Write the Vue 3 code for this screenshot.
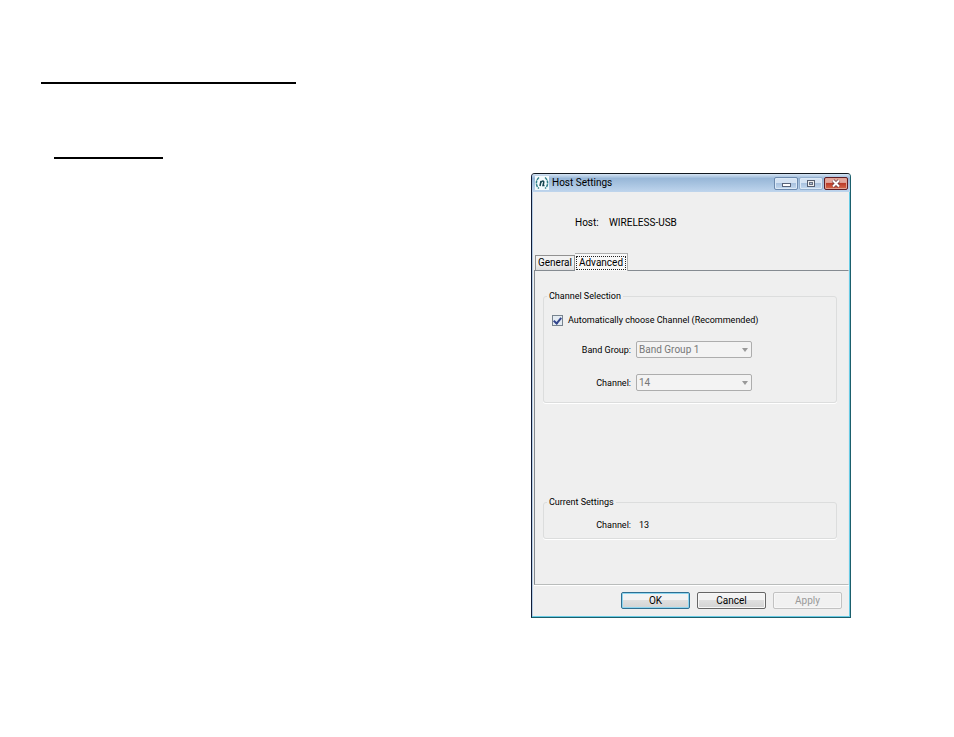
<script setup>
import { ref } from "vue";
const tab = ref("Advanced");
const tabs = ["General", "Advanced"];
const auto = ref(true);
const bandGroup = ref("Band Group 1");
const channel = ref("14");
</script>
<template>
  <main class="page">
    <section class="notes">
      <hr class="rule rule-main" />
      <hr class="rule rule-sub" />
    </section>
    <section class="dialog">
      <header class="titlebar">
        <svg class="logo" width="14" height="14" viewBox="0 0 14 14">
          <rect width="14" height="14" fill="#f4fbfd" />
          <g fill="none" stroke="#2f7f88" stroke-width="1.5">
            <path d="M4 1.5C.5 4 .5 10 4 12.5" stroke-dasharray="3 .7" />
            <path d="M10 1.5c3.500 2.500 3.500 8.500 0 11" stroke-dasharray="3 .7" />
            <path d="M5 10l1-5M5.800 6.500C7 4.500 9.200 4.500 8.700 6.500L8 9.500h1.500" stroke="#17454f" />
          </g>
        </svg>
        <h1 class="title">Host Settings</h1>
        <button class="win-button" aria-label="Minimize">
          <svg width="22" height="11" viewBox="0 0 22 11">
            <rect x="7.500" y="5.500" width="8" height="3" fill="#fff" stroke="#59647a" />
          </svg>
        </button>
        <button class="win-button maximize" aria-label="Maximize">
          <svg width="22" height="11" viewBox="0 0 22 11">
            <rect x="7.500" y="2.500" width="7" height="6" fill="#eee" stroke="#555e70" />
            <rect x="9.500" y="4.500" width="3" height="2" fill="#aebfd4" stroke="#666f80" />
          </svg>
        </button>
        <button class="win-button close" aria-label="Close">
          <svg width="22" height="11" viewBox="0 0 22 11">
            <path d="M8 2.500l6 6M14 2.500l-6 6" stroke="#6b3a40" stroke-width="3.500" />
            <path d="M8 2.500l6 6M14 2.500l-6 6" stroke="#fff" stroke-width="2" />
          </svg>
        </button>
      </header>
      <div class="host">
        <span class="host-label">Host:</span>
        <span>WIRELESS-USB</span>
      </div>
      <nav class="tabs">
        <button
          v-for="name in tabs"
          :key="name"
          class="tab"
          :class="{ active: tab === name }"
          @click="tab = name"
        >
          <span class="tab-text">{{ name }}</span>
        </button>
      </nav>
      <div class="panel">
        <fieldset class="group selection">
          <legend>Channel Selection</legend>
          <div class="check-row">
            <input id="auto" v-model="auto" class="check" type="checkbox" />
            <label for="auto">Automatically choose Channel (Recommended)</label>
          </div>
          <div class="field">
            <label class="field-label" for="band">Band Group:</label>
            <select id="band" v-model="bandGroup" class="combo" :disabled="auto">
              <option>Band Group 1</option>
            </select>
            <span class="arrow"></span>
          </div>
          <div class="field">
            <label class="field-label" for="channel">Channel:</label>
            <select id="channel" v-model="channel" class="combo" :disabled="auto">
              <option>14</option>
            </select>
            <span class="arrow"></span>
          </div>
        </fieldset>
        <fieldset class="group current">
          <legend>Current Settings</legend>
          <div class="current-row">
            <span class="field-label">Channel:</span>
            <span>13</span>
          </div>
        </fieldset>
      </div>
      <footer class="actions">
        <button class="action ok">OK</button>
        <button class="action">Cancel</button>
        <button class="action" disabled>Apply</button>
      </footer>
    </section>
  </main>
</template>
<style>
body {
  background: white;
}
</style>
<style scoped>
.page {
  display: flex;
  align-items: flex-start;
  padding: 82px 103px 60px 41px;
}
.page * {
  box-sizing: border-box;
}
.notes {
  flex: 1;
}
.rule {
  height: 2px;
  margin: 0;
  border: none;
  background: black;
}
.rule-main {
  width: 255px;
}
.rule-sub {
  width: 109px;
  margin: 73px 0 0 13px;
}
.dialog {
  flex: 0 0 320px;
  margin-top: 91px;
  background: #efefef;
  border: 1px solid #1b5f6c;
  border-top-color: #111820;
  border-left-color: #101c38;
  border-radius: 4px 4px 0 0;
  box-shadow: inset -1px -1px #68cbe4, inset 1px 0 #b5cce4;
  font-family: Roboto, "Liberation Sans", sans-serif;
  font-size: 9px;
  line-height: 12px;
  color: #000;
}
button,
select {
  font: inherit;
  font-size: 10px;
  color: inherit;
}
.titlebar {
  display: flex;
  align-items: center;
  height: 18px;
  padding: 0 2px 0 3px;
  border-radius: 3px 3px 0 0;
  background: linear-gradient(#d5e4f3, #98b7d8 25%, #a7c3e0 55%, #bfd5ed);
}
.title {
  flex: 1;
  margin: 0 0 0 3px;
  font-size: 10px;
  font-weight: normal;
}
.win-button {
  width: 24px;
  height: 13px;
  margin-left: 1px;
  padding: 0;
  border: 1px solid #6c89ad;
  border-radius: 2px;
  background: linear-gradient(#d5e3f3 45%, #a9c2df 50%, #c4d9ef);
  box-shadow: inset 0 0 0 1px #dce9f6;
}
.win-button svg {
  display: block;
}
.maximize {
  border-color: #94afce;
}
.close {
  border-color: #5e1d25;
  background: linear-gradient(#e3a79d 40%, #bd3c2a 50%, #d76a4c);
  box-shadow: inset 0 0 0 1px #e2a293;
}
.host {
  display: flex;
  gap: 14px;
  padding: 25px 16px 23px 43px;
  font-size: 10px;
}
.host-label {
  width: 20px;
}
.tabs {
  display: flex;
  align-items: flex-end;
  height: 18px;
  padding-left: 3px;
}
.tab {
  width: 40px;
  height: 15px;
  padding: 0;
  border: 1px solid #919191;
  border-bottom: none;
  background: linear-gradient(#f2f2f2 50%, #dedede);
}
.tab.active {
  z-index: 1;
  width: 53px;
  height: 18px;
  margin-bottom: -1px;
  padding: 1px;
  border-left: none;
  border-color: #b0b0b0;
  background: #f8f8f8;
}
.tab-text {
  display: block;
}
.active .tab-text {
  border: 1px dotted #222;
}
.panel {
  margin: 0 1px 0 2px;
  padding: 19px 11px 45px 8px;
  border: 1px solid #858b91;
  border-right-color: #e6e9ec;
  border-bottom-color: #b9bcbb;
  box-shadow: 0 1px white;
}
.group {
  margin: 0;
  border: 1px solid #dcdddd;
  border-radius: 3px;
  box-shadow: 0 1px white;
}
.group legend {
  margin-left: 3px;
  padding: 0 2px;
}
.selection {
  height: 113px;
  padding: 12px 0 0;
}
.check-row {
  display: flex;
  align-items: center;
  gap: 5px;
  padding-left: 8px;
  margin-bottom: 15px;
}
.check {
  appearance: none;
  display: grid;
  place-items: center;
  width: 11px;
  height: 11px;
  margin: 0;
  border: 1px solid #77838e;
  background: #e4ebf2;
}
.check:checked::after {
  content: "";
  width: 3px;
  height: 6px;
  margin-bottom: 2px;
  border: solid #32458c;
  border-width: 0 2px 2px 0;
  transform: rotate(40deg);
}
.field {
  display: flex;
  align-items: center;
  margin-bottom: 16px;
}
.field-label {
  width: 87px;
  text-align: right;
}
.combo {
  appearance: none;
  width: 116px;
  height: 17px;
  margin-left: 5px;
  padding: 0 2px;
  border: 1px solid #adadad;
  border-radius: 2px;
  background: #f3f3f3;
}
.combo:disabled {
  color: #777;
  opacity: 1;
}
.arrow {
  width: 0;
  margin-left: -10px;
  border: 3px solid transparent;
  border-top: 4px solid #999;
  border-bottom: none;
  pointer-events: none;
}
.current {
  height: 43px;
  margin-top: 93px;
  padding: 11px 0 0;
}
.current-row {
  display: flex;
  gap: 8px;
}
.actions {
  display: flex;
  justify-content: flex-end;
  gap: 7px;
  padding: 7px 8px 8px;
}
.action {
  width: 69px;
  height: 17px;
  padding: 0;
  border: 1px solid #666;
  border-radius: 2px;
  background: linear-gradient(#f3f3f3 45%, #dfdfdf 50%, #d3d3d3);
  box-shadow: inset 0 0 0 1px #f7f7f7;
}
.ok {
  border-color: #2f6f91;
  box-shadow: inset 0 0 0 1px #8fd6f0;
}
.action:disabled {
  color: #999;
  border-color: #c2c2c2;
  background: #f1f1f1;
}
</style>
